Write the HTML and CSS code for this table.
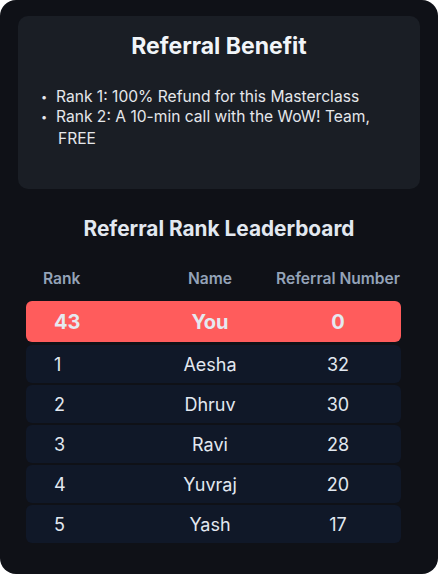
FILE: index.html
```html
<!DOCTYPE html>
<html lang="en">
<head>
  <meta charset="UTF-8">
  <meta name="viewport" content="width=device-width, initial-scale=1.0">
  <title>Referral Leaderboard</title>
  <link rel="stylesheet" href="styles.css">
</head>
<body>
  <div class="panel">
    <div class="benefit">
      <h2>Referral Benefit</h2>
      <ul>
        <li>Rank 1: 100% Refund for this Masterclass</li>
        <li>Rank 2: A 10-min call with the WoW! Team,<br><span class="free">FREE</span></li>
      </ul>
    </div>

    <h3>Referral Rank Leaderboard</h3>

    <div class="board">
      <div class="row head">
        <span class="rank">Rank</span>
        <span>Name</span>
        <span>Referral Number</span>
      </div>
      <div class="row me">
        <span class="rank">43</span>
        <span>You</span>
        <span>0</span>
      </div>
      <div class="row">
        <span class="rank">1</span>
        <span>Aesha</span>
        <span>32</span>
      </div>
      <div class="row">
        <span class="rank">2</span>
        <span>Dhruv</span>
        <span>30</span>
      </div>
      <div class="row">
        <span class="rank">3</span>
        <span>Ravi</span>
        <span>28</span>
      </div>
      <div class="row">
        <span class="rank">4</span>
        <span>Yuvraj</span>
        <span>20</span>
      </div>
      <div class="row">
        <span class="rank">5</span>
        <span>Yash</span>
        <span>17</span>
      </div>
    </div>
  </div>
</body>
</html>
```

FILE: styles.css
```css
body {
  margin: 0;
  background: #ffffff;
  font-family: Inter, 'Noto Sans', sans-serif;
}
.panel {
  width: 438px;
  height: 574px;
  box-sizing: border-box;
  padding: 16px 18px 0 18px;
  background-color: #0f1117;
  border-radius: 16px;
  color: #e2e8f0;
}
.benefit {
  height: 173px;
  box-sizing: border-box;
  padding-top: 16px;
  background-color: #1a1e25;
  border-radius: 10px;
}
.benefit h2 {
  margin: 0;
  text-align: center;
  font-size: 23px;
  line-height: 28px;
  font-weight: 700;
  color: #f1f5f9;
}
.benefit ul {
  margin: 27px 0 0 0;
  padding: 0 0 0 38px;
  list-style: none;
  font-size: 15.6px;
  line-height: 20px;
  color: #e5e7eb;
}
.benefit li {
  position: relative;
}
.benefit li::before {
  content: "•";
  position: absolute;
  left: -15px;
  font-size: 11px;
}
.free {
  display: inline-block;
  margin-top: 2px;
  padding-left: 2px;
}
h3 {
  margin: 28px 0 0 0;
  text-align: center;
  font-size: 20.8px;
  line-height: 24px;
  font-weight: 700;
  color: #e2e8f0;
}
.board {
  margin: 0 0 0 8px;
  width: 375px;
  display: flex;
  flex-direction: column;
  gap: 2px;
}
.row {
  display: grid;
  grid-template-columns: 119px 130px 126px;
  align-items: center;
  justify-items: center;
  height: 38px;
  background-color: #101828;
  border-radius: 6px;
  font-size: 18px;
  color: #e2e8f0;
  white-space: nowrap;
}
.row .rank {
  justify-self: start;
  padding-left: 28px;
}
.row.head {
  height: 20px;
  margin: 27px 0 11px 0;
  background: none;
  font-size: 15.6px;
  font-weight: 600;
  color: #94a3b8;
}
.row.head .rank {
  padding-left: 17px;
}
.row.me {
  height: 41px;
  margin-bottom: 1px;
  background-color: #ff5c5c;
  font-size: 20px;
  font-weight: 700;
  color: #e5e9f0;
}
```
